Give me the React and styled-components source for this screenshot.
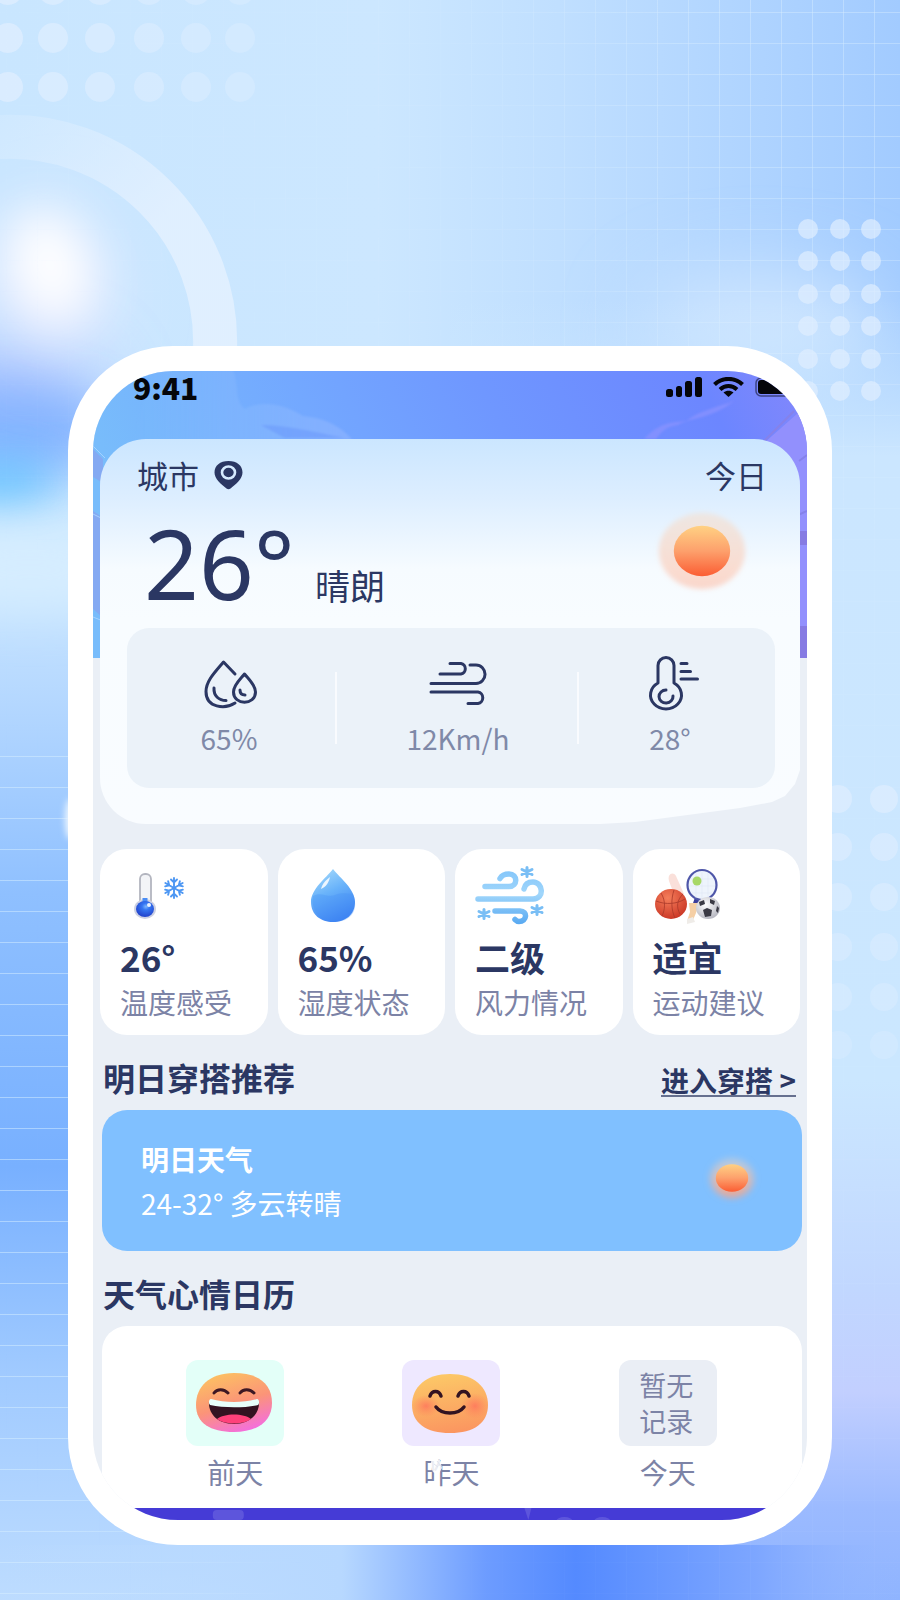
import styled, { createGlobalStyle } from "styled-components";

const GlobalStyle = createGlobalStyle`
  * {
    box-sizing: border-box;
  }
  body {
    margin: 0;
    font-family: "Noto Sans CJK SC", "Noto Sans", sans-serif;
    color: #2b3763;
    background: #cbe6ff;
  }
  h2, p {
    margin: 0;
  }
  svg {
    display: block;
    flex-shrink: 0;
  }
`;

const Page = styled.div`
  position: relative;
  min-height: 100vh;
  padding: 346px 68px 55px;
  overflow: hidden;
`;

const Backdrop = styled.svg`
  position: absolute;
  inset: 0;
  width: 100%;
  height: 100%;
`;

const Phone = styled.main`
  position: relative;
  border: 25px solid #fff;
  border-radius: 105px 105px 110px 110px / 105px 105px 108px 108px;
  background: #fff;
  overflow: hidden;
`;

const Screen = styled.div`
  position: relative;
  background: #eaeff6;
`;

const Sky = styled.svg`
  position: absolute;
  top: 0;
  left: 0;
  width: 100%;
  height: 287px;
`;

const StatusBar = styled.header`
  position: relative;
  display: flex;
  justify-content: space-between;
  height: 68px;
  padding: 0 6px 0 40px;
  color: #05060a;
`;

const Clock = styled.span`
  font-size: 30px;
  font-weight: 900;
  line-height: 32px;
`;

const StatusIcons = styled.div`
  display: flex;
  align-items: flex-start;
  gap: 11px;
  padding-top: 6px;
`;

const Content = styled.div`
  position: relative;
  padding: 0 7px;
`;

const WeatherCard = styled.section`
  padding: 17px 25px 36px 27px;
  border-radius: 46px;
  background: linear-gradient(#cbe6ff 0, #ddeeff 60px, #f6fbff 130px, #f8fcff 180px, #f9fcff 100%);
  clip-path: polygon(
    0 0,
    100% 0,
    100% calc(100% - 54px),
    calc(100% - 5px) calc(100% - 40px),
    calc(100% - 15px) calc(100% - 28px),
    calc(100% - 28px) calc(100% - 22px),
    calc(100% - 60px) calc(100% - 16px),
    calc(100% - 165px) calc(100% - 2px),
    calc(100% - 200px) 100%,
    0 100%
  );
`;

const CardHead = styled.div`
  display: flex;
  align-items: center;
  justify-content: space-between;
  padding: 0 8px 0 10px;
  font-size: 31px;
  line-height: 38px;
`;

const CityButton = styled.button`
  display: flex;
  align-items: center;
  gap: 15px;
  padding: 0;
  border: 0;
  background: none;
  color: inherit;
  font: inherit;
  cursor: pointer;
`;

const Now = styled.div`
  display: flex;
  align-items: baseline;
  gap: 20px;
  height: 134px;
  padding-left: 17px;
`;

const Degrees = styled.span`
  font-family: "Noto Sans", sans-serif;
  font-size: 96px;
  line-height: 138px;
`;

const Condition = styled.span`
  flex: 1;
  font-size: 35px;
`;

const BigSun = styled.div`
  align-self: flex-start;
  margin: 15px 26px 0 0;
`;

const Stats = styled.div`
  display: grid;
  grid-template-columns: 208fr 242fr 198fr;
  align-items: center;
  height: 160px;
  border-radius: 22px;
  background: #ebf2f9;
`;

const Stat = styled.div`
  display: flex;
  flex-direction: column;
  align-items: center;
  justify-content: center;
  height: 72px;
  padding-right: 4px;
  gap: 4px;
  font-size: 28px;
  line-height: 40px;
  color: #7f89a8;
  & + & {
    padding: 0 0 0 2px;
    border-left: 2px solid #f9fbfe;
  }
  &:last-child {
    padding-right: 16px;
  }
`;

const QuickGrid = styled.section`
  display: grid;
  grid-template-columns: repeat(4, 1fr);
  gap: 10px;
  margin-top: 25px;
`;

const QuickCard = styled.div`
  padding: 10px 0 13px 20px;
  border-radius: 27px;
  background: #fff;
`;

const QuickIcon = styled.div`
  display: flex;
  align-items: center;
  height: 72px;
  margin-bottom: 6px;
  padding-left: ${(p) => p.$indent || 0}px;
`;

const QuickValue = styled.p`
  font-size: 35px;
  font-weight: 700;
  line-height: 40px;
`;

const QuickLabel = styled.p`
  margin-top: 5px;
  font-size: 28px;
  line-height: 40px;
  color: #7c83a6;
`;

const SectionHead = styled.div`
  display: flex;
  align-items: flex-end;
  justify-content: space-between;
  padding: 22px 4px 13px 3px;
`;

const SectionTitle = styled.h2`
  font-size: 32px;
  font-weight: 700;
  line-height: 40px;
`;

const MoreLink = styled.a`
  border-bottom: 2px solid #66708f;
  color: inherit;
  font-size: 28px;
  font-weight: 700;
  line-height: 30px;
  text-decoration: none;
`;

const TomorrowCard = styled.section`
  display: flex;
  align-items: flex-start;
  justify-content: space-between;
  margin: 0 -2px 0 2px;
  padding: 27px 43px 26px 39px;
  border-radius: 25px;
  background: #80c0ff;
  color: #fff;
  font-size: 28px;
  line-height: 44px;
  svg {
    margin-top: 18px;
  }
`;

const Strong = styled.p`
  font-weight: 700;
`;

const MoodCard = styled.section`
  display: grid;
  grid-template-columns: repeat(3, 1fr);
  margin: 0 -2px 0 2px;
  padding: 34px 26px 16px 25px;
  border-radius: 25px 25px 0 0;
  background: #fff;
`;

const Mood = styled.div`
  display: flex;
  flex-direction: column;
  align-items: center;
  gap: 6px;
  color: #7c83a6;
  font-size: 28px;
  line-height: 40px;
`;

const MoodTile = styled.div`
  display: flex;
  align-items: center;
  justify-content: center;
  width: 98px;
  height: 86px;
  padding-right: 3px;
  border-radius: 12px;
  background: ${(p) => p.$color};
  font-size: 27px;
  line-height: 36px;
`;

const MoodDay = styled.span`
  position: relative;
`;

const Flake = styled.svg`
  position: absolute;
  top: 6px;
  left: 7px;
`;

const TabBar = styled.svg`
  position: relative;
  width: 100%;
  height: 12px;
  background: #453bd6;
`;

const leftDots = [8, 53, 100, 149, 196, 240];
const rightRows = [229, 261, 294, 326, 359, 391];
const lowerRows = [799, 847, 897, 947, 997, 1045];

function Background() {
  return (
    <Backdrop viewBox="0 0 900 1600" preserveAspectRatio="none" aria-hidden="true">
      <defs>
        <linearGradient id="base" x1="0" y1="0" x2="1" y2="0">
          <stop offset="0" stopColor="#c9e6ff" />
          <stop offset="0.42" stopColor="#cce7ff" />
          <stop offset="0.62" stopColor="#c0dfff" />
          <stop offset="1" stopColor="#a2cbff" />
        </linearGradient>
        <linearGradient id="leftSide" x1="0" y1="0" x2="0" y2="1">
          <stop offset="0" stopColor="#cfeaff" stopOpacity="0" />
          <stop offset="0.08" stopColor="#cfeaff" />
          <stop offset="0.2" stopColor="#b7d9ff" />
          <stop offset="0.38" stopColor="#8fc0ff" />
          <stop offset="0.62" stopColor="#78b0ff" />
          <stop offset="0.8" stopColor="#a0caff" />
          <stop offset="1" stopColor="#bddcff" />
        </linearGradient>
        <linearGradient id="rightSide" x1="0" y1="0" x2="0" y2="1">
          <stop offset="0" stopColor="#cbe7ff" stopOpacity="0" />
          <stop offset="0.12" stopColor="#cbe6ff" />
          <stop offset="0.6" stopColor="#cbe7ff" />
          <stop offset="0.76" stopColor="#c1d7ff" />
          <stop offset="0.84" stopColor="#c2cfff" />
          <stop offset="0.93" stopColor="#9bbaff" />
          <stop offset="1" stopColor="#8fb4ff" />
        </linearGradient>
        <linearGradient id="footer" x1="0" y1="0" x2="1" y2="0">
          <stop offset="0" stopColor="#bddcff" stopOpacity="0" />
          <stop offset="0.38" stopColor="#b7d8ff" />
          <stop offset="0.54" stopColor="#6d9cff" />
          <stop offset="0.64" stopColor="#548aff" />
          <stop offset="0.84" stopColor="#7da6ff" />
          <stop offset="1" stopColor="#98baff" stopOpacity="0" />
        </linearGradient>
        <linearGradient id="gridAcross" x1="0" y1="0" x2="1" y2="0">
          <stop offset="0" stopColor="#fff" stopOpacity="0.1" />
          <stop offset="0.5" stopColor="#fff" stopOpacity="0.2" />
          <stop offset="0.8" stopColor="#fff" stopOpacity="0.8" />
        </linearGradient>
        <linearGradient id="gridDown" x1="0" y1="0" x2="0" y2="1">
          <stop offset="0" stopColor="#fff" />
          <stop offset="0.18" stopColor="#fff" stopOpacity="0.8" />
          <stop offset="0.35" stopColor="#fff" stopOpacity="0.25" />
          <stop offset="1" stopColor="#fff" stopOpacity="0.1" />
        </linearGradient>
        <linearGradient id="ringFade" gradientUnits="userSpaceOnUse" x1="0" y1="100" x2="140" y2="240">
          <stop offset="0" stopColor="#e4f1ff" stopOpacity="0.2" />
          <stop offset="1" stopColor="#e7f2ff" stopOpacity="0.75" />
        </linearGradient>
        <linearGradient id="linesFade" gradientUnits="userSpaceOnUse" x1="0" y1="0" x2="300" y2="0">
          <stop offset="0.2" stopColor="#fff" />
          <stop offset="1" stopColor="#fff" stopOpacity="0" />
        </linearGradient>
        <pattern id="grid" x="6" y="12" width="31" height="31" patternUnits="userSpaceOnUse">
          <path d="M0 .5H31M.5 0V31" stroke="#e2f5ff" strokeOpacity="0.45" />
        </pattern>
        <pattern id="lines" y="12" width="31" height="31" patternUnits="userSpaceOnUse">
          <path d="M0 .5H31" stroke="#d8efff" strokeOpacity="0.5" />
        </pattern>
        <mask id="maskAcross">
          <rect width="900" height="1600" fill="url(#gridAcross)" />
        </mask>
        <mask id="maskDown">
          <rect width="900" height="1600" fill="url(#gridDown)" />
        </mask>
        <mask id="maskLines">
          <rect width="900" height="1600" fill="url(#linesFade)" />
        </mask>
        <filter id="soft" x="-100%" y="-100%" width="300%" height="300%">
          <feGaussianBlur stdDeviation="24" />
        </filter>
        <filter id="softer" x="-100%" y="-100%" width="300%" height="300%">
          <feGaussianBlur stdDeviation="36" />
        </filter>
        <filter id="edge" x="-100%" y="-50%" width="300%" height="200%">
          <feGaussianBlur stdDeviation="3" />
        </filter>
      </defs>
      <rect width="900" height="1600" fill="url(#base)" />
      <ellipse cx="760" cy="330" rx="120" ry="60" fill="#cde5ff" filter="url(#softer)" />
      <rect y="460" width="450" height="1140" fill="url(#leftSide)" />
      <rect x="450" y="300" width="450" height="1300" fill="url(#rightSide)" />
      <ellipse cx="10" cy="405" rx="90" ry="60" fill="#a3bdff" filter="url(#softer)" />
      <ellipse cx="20" cy="430" rx="90" ry="40" fill="#84b4ff" filter="url(#soft)" />
      <ellipse cx="0" cy="482" rx="60" ry="20" fill="#5cc4ff" filter="url(#soft)" />
      <ellipse cx="30" cy="570" rx="140" ry="40" fill="#d6edff" filter="url(#soft)" />
      <ellipse cx="50" cy="285" rx="52" ry="68" fill="#e6e9ff" transform="rotate(-18 50 285)" filter="url(#softer)" />
      <ellipse cx="50" cy="265" rx="38" ry="56" fill="#fff" transform="rotate(-18 50 265)" filter="url(#soft)" />
      <rect y="1545" width="900" height="55" fill="url(#footer)" />
      <g mask="url(#maskDown)">
        <rect width="900" height="1600" fill="url(#grid)" mask="url(#maskAcross)" />
      </g>
      <rect y="740" width="300" height="860" fill="url(#lines)" mask="url(#maskLines)" />
      <path d="M-10 137H0A205 205 0 0 1 215 350" fill="none" stroke="url(#ringFade)" strokeWidth="44" />
      <g fill="#e4efff" fillOpacity="0.65">
        {leftDots.map((x, i) => (
          <g key={x} opacity={1 - i * 0.1}>
            <circle cx={x} cy="-10" r="15" />
            <circle cx={x} cy="38" r="15" />
            <circle cx={x} cy="87" r="15" />
          </g>
        ))}
      </g>
      <g fill="#e0eeff" fillOpacity="0.7">
        {rightRows.map((y) => (
          <g key={y}>
            <circle cx="808" cy={y} r="10" />
            <circle cx="840" cy={y} r="10" />
            <circle cx="871" cy={y} r="10" />
          </g>
        ))}
        {lowerRows.map((y, i) => (
          <g key={y} opacity={0.95 - i * 0.1}>
            <circle cx="838" cy={y} r="14" />
            <circle cx="884" cy={y} r="14" />
          </g>
        ))}
      </g>
      <ellipse cx="70" cy="819" rx="5" ry="20" fill="#eef7ff" filter="url(#edge)" />
    </Backdrop>
  );
}

function SkyArt() {
  return (
    <Sky viewBox="0 0 715 287" preserveAspectRatio="none" aria-hidden="true">
      <defs>
        <linearGradient id="sky" x1="0" y1="0.2" x2="1" y2="0">
          <stop offset="0" stopColor="#78bcfb" />
          <stop offset="0.3" stopColor="#73a8ff" />
          <stop offset="0.55" stopColor="#6f97ff" />
          <stop offset="0.85" stopColor="#6c86ff" />
          <stop offset="1" stopColor="#8587fb" />
        </linearGradient>
        <linearGradient id="cloud" x1="0" y1="0" x2="1" y2="0">
          <stop offset="0" stopColor="#8fc6ff" stopOpacity="0" />
          <stop offset="1" stopColor="#8db3ff" stopOpacity="0.7" />
        </linearGradient>
        <filter id="mist">
          <feGaussianBlur stdDeviation="1" />
        </filter>
      </defs>
      <rect width="715" height="287" fill="url(#sky)" />
      <g filter="url(#mist)">
        <path d="M60 -6h78c10 20 2 34 14 44 18-10 42-4 58 7 20 2 36 8 50 24H40z" fill="url(#cloud)" />
        <path d="M168 54c24 0 44 5 84 13h-60z" fill="#6795fb" fillOpacity="0.5" />
        <path d="M552 68c14-16 28-17 42-18 14-11 32-14 48-20-24 19-44 16-56 24-12 1-18 8-22 14z" fill="#8a93ff" fillOpacity="0.7" />
      </g>
      <path d="M672 72L715 34V287H700V90z" fill="#9290fd" />
      <path d="M672 70L702 40M707 90L715 84M704 145L715 140" stroke="#8582ea" strokeWidth="2" />
      <path d="M706 160h9v14h-9zM706 255h9v32h-9z" fill="#7a66c9" fillOpacity="0.5" />
      <path d="M0 78l10 10v24L0 106zM0 140l9 6v100L0 238z" fill="#8c9cec" fillOpacity="0.6" />
      <path d="M0 75l12 12M0 143l10 5M0 246l10 4" stroke="#a5d2ff" strokeWidth="1" />
    </Sky>
  );
}

function Sun({ width, height, big }) {
  const id = big ? "sunBig" : "sunSmall";
  return (
    <svg width={width} height={height} viewBox="0 0 100 90" preserveAspectRatio="none" overflow="visible" aria-hidden="true">
      <defs>
        <linearGradient id={id} x1="0" y1="0" x2="0" y2="1">
          <stop offset="0" stopColor="#ffd183" />
          <stop offset="0.5" stopColor="#fda06c" />
          <stop offset="1" stopColor="#fb5d33" />
        </linearGradient>
        <linearGradient id={id + "Halo"} x1="0" y1="0" x2="0" y2="1">
          <stop offset="0" stopColor="#ffd9b8" stopOpacity="0.4" />
          <stop offset="1" stopColor="#ff9f7c" stopOpacity={big ? 0.4 : 0.9} />
        </linearGradient>
        <filter id={id + "Blur"} x="-50%" y="-50%" width="200%" height="200%">
          <feGaussianBlur stdDeviation={big ? 3 : 7} />
        </filter>
      </defs>
      <ellipse cx="50" cy="45" rx={big ? 46 : 40} ry={big ? 41 : 38} fill={`url(#${id}Halo)`} filter={`url(#${id}Blur)`} />
      <ellipse cx="50" cy="45" rx="30" ry="27" fill={`url(#${id})`} />
    </svg>
  );
}

function SignalIcon() {
  return (
    <svg width="36" height="20" viewBox="0 0 36 20" fill="currentColor" aria-hidden="true">
      <rect y="12" width="7" height="8" rx="2.500" />
      <rect x="10" y="9" width="6" height="11" rx="2.500" />
      <rect x="19" y="4" width="7" height="16" rx="2.500" />
      <rect x="29" width="7" height="20" rx="2.500" />
    </svg>
  );
}

function WifiIcon() {
  return (
    <svg width="31" height="20" viewBox="0 0 31 20" fill="none" stroke="currentColor" strokeWidth="4" aria-hidden="true">
      <path d="M1.500 7.500C9 0 22 0 29.500 7.500" />
      <path d="M7 12.500c5-4.600 12-4.600 17 0" />
      <path d="M10.500 15.500c3-2.500 7-2.500 10 0L15.500 20z" fill="currentColor" stroke="none" />
    </svg>
  );
}

function BatteryIcon() {
  return (
    <svg width="46" height="20" viewBox="0 0 46 20" aria-hidden="true">
      <rect x="1" y="1" width="42" height="18" rx="5" fill="none" stroke="#3d4484" strokeWidth="1.500" />
      <rect x="3" y="3" width="38" height="14" rx="3" fill="currentColor" />
    </svg>
  );
}

function PinIcon() {
  return (
    <svg width="29" height="29" viewBox="0 1 29 29" aria-hidden="true">
      <path d="M14.500 1C23 1 28.500 5.500 28.500 12.500c0 6.500-6.500 11.500-12 16a3.200 3.200 0 0 1-4 0C7 24 .5 19 .5 12.500.5 5.500 6 1 14.500 1z" fill="#2b3763" />
      <ellipse cx="14.500" cy="12.500" rx="6.500" ry="6" fill="none" stroke="#d7ebff" strokeWidth="2.600" />
    </svg>
  );
}

const LineIcon = styled.svg.attrs({ fill: "none", "aria-hidden": true })`
  overflow: visible;
  stroke: #2b3763;
  stroke-width: 3;
  stroke-linecap: round;
  stroke-linejoin: round;
`;

function DropsIcon() {
  return (
    <LineIcon width="57" height="56" viewBox="-2 1 57 56">
      <path d="M32 17L20.500 5C12 15 3 24 3 34.500 3 51 22 52.500 32 46" />
      <path d="M41.500 17c-4 5-11 11-11 18 0 13.500 22 13.500 22 0 0-7-7-13-11-18z" />
      <path d="M11 31c-.5 8 5 12.500 12 12.500M37 33c0 3.500 2 5 5 5" />
    </LineIcon>
  );
}

function WindIcon() {
  return (
    <LineIcon width="62" height="56" viewBox="0 1 62 56">
      <path d="M23 6.500h11a5 5.300 0 0 1 0 10.500H13" />
      <path d="M43 8h6a9 9.200 0 0 1 0 18.500H4" />
      <path d="M4 35h47a5.500 5.800 0 0 1 0 11.500H41" />
    </LineIcon>
  );
}

function ThermometerIcon() {
  return (
    <LineIcon width="63" height="56" viewBox="-8 2 63 56">
      <path d="M11 27V9.500a8 8 0 0 1 16 0V27a15.500 14 0 1 1-16 0z" />
      <path d="M19 34a7 6.500 0 1 0 7 6" />
      <path d="M34 7.500h6M34 15.500h9.500M34 23h16.500" />
    </LineIcon>
  );
}

function ColdIcon() {
  return (
    <svg width="56" height="56" viewBox="0 0 56 56" aria-hidden="true">
      <defs>
        <radialGradient id="bulb" cx="0.55" cy="0.35" r="0.6">
          <stop offset="0" stopColor="#7cb7ff" />
          <stop offset="0.35" stopColor="#3576f2" />
          <stop offset="1" stopColor="#2347cf" />
        </radialGradient>
      </defs>
      <rect x="8" y="7" width="11" height="34" rx="5" fill="#f3f4f7" stroke="#b3b5bf" strokeWidth="1.800" />
      <ellipse cx="13" cy="42" rx="11" ry="10" fill="#cdd1e3" />
      <rect x="10.500" y="31" width="5" height="8" fill="#4b8df5" />
      <ellipse cx="13" cy="42" rx="9" ry="8" fill="url(#bulb)" />
      <circle cx="17" cy="38" r="2" fill="#e9f3ff" />
      <g stroke="#4d97f3" strokeWidth="1.900" strokeLinecap="round" fill="none">
        {[0, 60, 120, 180, 240, 300].map((a) => (
          <path key={a} d="M42 21V11M39 12.500l3 3 3-3" transform={`rotate(${a} 42 21)`} />
        ))}
      </g>
    </svg>
  );
}

function HumidityIcon() {
  return (
    <svg width="48" height="56" viewBox="0 0 48 56" aria-hidden="true">
      <defs>
        <linearGradient id="water" x1="0.2" y1="0" x2="0.6" y2="1">
          <stop offset="0" stopColor="#a5dafb" />
          <stop offset="0.45" stopColor="#68b2fa" />
          <stop offset="1" stopColor="#3c80f2" />
        </linearGradient>
      </defs>
      <path d="M23 2c7 9 22 20 22 33 0 13-10 20-22 20S1 48 1 35C1 22 16 11 23 2z" fill="url(#water)" />
      <path d="M3 29c8-5 14 2 22-1 8-3 12-1 18-1 4 10 3 21-8 26C20 59 0 51 3 29z" fill="#438df6" fillOpacity="0.3" />
      <path d="M11 22c1-5 5-9 9-12-1 5-4 10-9 12z" fill="#fff" fillOpacity="0.85" />
    </svg>
  );
}

function BreezeIcon() {
  return (
    <svg width="70" height="60" viewBox="0 0 70 60" fill="none" overflow="visible" aria-hidden="true">
      <defs>
        <linearGradient id="breeze" gradientUnits="userSpaceOnUse" x1="0" y1="0" x2="0" y2="58">
          <stop offset="0" stopColor="#7fc3fa" />
          <stop offset="0.5" stopColor="#a0d6fb" />
          <stop offset="1" stopColor="#5babf2" />
        </linearGradient>
      </defs>
      <g stroke="url(#breeze)" strokeWidth="5.500" strokeLinecap="round">
        <path d="M10 21.500h24c9 0 9-12.500 0-12.500-5 0-7 1-9 4.500" />
        <path d="M3 34h55c12 0 10-17 0-17-5 0-8 2-9 7" />
        <path d="M20 46h25c8 0 7 10.500-1 10.500-2 0-3-1-4-2" />
      </g>
      <g stroke="#79bef5" strokeWidth="3" strokeLinecap="round">
        {[[52, 7], [9, 49], [62, 45]].map(([x, y]) => (
          <path key={x} d={`M${x} ${y - 4.5}v9M${x - 5} ${y - 2.5}l10 5M${x - 5} ${y + 2.5}l10-5`} />
        ))}
      </g>
    </svg>
  );
}

function SportsIcon() {
  return (
    <svg width="66" height="58" viewBox="0 0 66 58" aria-hidden="true">
      <defs>
        <radialGradient id="basket" cx="0.4" cy="0.3" r="0.75">
          <stop offset="0" stopColor="#f57e5b" />
          <stop offset="1" stopColor="#c93524" />
        </radialGradient>
        <radialGradient id="soccer" cx="0.4" cy="0.35" r="0.7">
          <stop offset="0" stopColor="#fff" />
          <stop offset="1" stopColor="#b3b4be" />
        </radialGradient>
      </defs>
      <path d="M14 15c-2-7 4-10 7-5l8 18-9 3z" fill="#fae0da" />
      <path d="M41 33l-2 6 5-2z" fill="#3b3e9b" stroke="#3b3e9b" strokeWidth="3" />
      <ellipse cx="47" cy="19" rx="14.500" ry="15" fill="#eef4fc" stroke="#4f57a9" strokeWidth="2.200" />
      <path d="M36 13h22M34 20h26M37 27h20M41 7v25M47 5v28M53 7v25" stroke="#dfe7f5" strokeWidth="0.600" />
      <circle cx="42" cy="15" r="4.500" fill="#a7d867" />
      <path d="M34 37h10l-3 10-3 7-6 1 3-9z" fill="#f5cfa5" />
      <path d="M32 53l6-2 2 5-8 2z" fill="#efece8" />
      <ellipse cx="16" cy="38" rx="16" ry="15" fill="url(#basket)" />
      <path d="M1 35c10 4 21 3 29-2M19 24c-3 9-3 20 1 28M6 27c5 8 4 17 1 23M28 28c-6 6-7 13-3 20" stroke="#a8392a" strokeWidth="0.800" fill="none" />
      <ellipse cx="53" cy="42" rx="12" ry="11" fill="url(#soccer)" />
      <path d="M48 44l4-2 5 2-1 6-6 1zM44 36l5-2 1 4-5 2zM55 33l5 2-1 4-4-2z" fill="#3a3a44" />
      <path d="M62 40l2 2-1 5-2-2z" fill="#3a3a44" />
    </svg>
  );
}

function LaughFace() {
  return (
    <svg width="76" height="60" viewBox="0 0 76 60" role="img" aria-label="大笑">
      <defs>
        <linearGradient id="laugh" x1="0.35" y1="0" x2="0.75" y2="1">
          <stop offset="0" stopColor="#fcbf63" />
          <stop offset="0.5" stopColor="#fb9478" />
          <stop offset="1" stopColor="#f36be6" />
        </linearGradient>
      </defs>
      <path d="M38 0c26 0 38 12 38 30S62 59 38 59 0 50 0 32 13 0 38 0z" fill="url(#laugh)" />
      <path d="M18 20c3-4.500 10-4.500 14 0M44 20c3-4.500 10-4.500 14 0" stroke="#3d1824" strokeWidth="3" strokeLinecap="round" fill="none" />
      <path d="M13 28c16 5 34 5 50 0 1 13-9 23-25 23S12 41 13 28z" fill="#331321" />
      <path d="M15 26c14 4 32 4 46 0 2 0 3 4 1 6-14 3-34 3-48 0-2-2-1-6 1-6z" fill="#e8fffb" />
      <path d="M21 46c7-6 27-6 34 0-8 6-26 6-34 0z" fill="#ff417a" />
    </svg>
  );
}

function SmileFace() {
  return (
    <svg width="76" height="60" viewBox="0 0 76 60" role="img" aria-label="微笑">
      <defs>
        <linearGradient id="smile" x1="0.4" y1="0" x2="0.6" y2="1">
          <stop offset="0" stopColor="#fcc867" />
          <stop offset="1" stopColor="#fb9560" />
        </linearGradient>
        <radialGradient id="blush">
          <stop offset="0" stopColor="#ff6f5c" stopOpacity="0.75" />
          <stop offset="1" stopColor="#ff7f5c" stopOpacity="0" />
        </radialGradient>
      </defs>
      <path d="M38 1c24 0 38 13 38 31S62 60 38 60 0 50 0 32 14 1 38 1z" fill="url(#smile)" />
      <ellipse cx="14" cy="33" rx="14" ry="11" fill="url(#blush)" />
      <ellipse cx="63" cy="33" rx="14" ry="13" fill="url(#blush)" />
      <path d="M18 23c2-6 9-6 11 0M46 23c2-6 9-6 11 0M24 34c6 8 22 8 28 0" stroke="#331321" strokeWidth="3.500" strokeLinecap="round" fill="none" />
    </svg>
  );
}

const stats = [
  { text: "65%", icon: <DropsIcon /> },
  { text: "12Km/h", icon: <WindIcon /> },
  { text: "28°", icon: <ThermometerIcon /> },
];

const quickItems = [
  { value: "26°", label: "温度感受", icon: <ColdIcon />, indent: 12 },
  { value: "65%", label: "湿度状态", icon: <HumidityIcon />, indent: 12 },
  { value: "二级", label: "风力情况", icon: <BreezeIcon /> },
  { value: "适宜", label: "运动建议", icon: <SportsIcon />, indent: 2 },
];

export default function App() {
  return (
    <Page>
      <GlobalStyle />
      <Background />
      <Phone>
        <Screen>
          <SkyArt />
          <StatusBar>
            <Clock>9:41</Clock>
            <StatusIcons>
              <SignalIcon />
              <WifiIcon />
              <BatteryIcon />
            </StatusIcons>
          </StatusBar>
          <Content>
            <WeatherCard>
              <CardHead>
                <CityButton type="button">
                  城市
                  <PinIcon />
                </CityButton>
                <span>今日</span>
              </CardHead>
              <Now>
                <Degrees>26°</Degrees>
                <Condition>晴朗</Condition>
                <BigSun>
                  <Sun big width={94} height={84} />
                </BigSun>
              </Now>
              <Stats>
                {stats.map((item) => (
                  <Stat key={item.text}>
                    {item.icon}
                    <span>{item.text}</span>
                  </Stat>
                ))}
              </Stats>
            </WeatherCard>

            <QuickGrid>
              {quickItems.map((item) => (
                <QuickCard key={item.label}>
                  <QuickIcon $indent={item.indent}>{item.icon}</QuickIcon>
                  <QuickValue>{item.value}</QuickValue>
                  <QuickLabel>{item.label}</QuickLabel>
                </QuickCard>
              ))}
            </QuickGrid>

            <SectionHead>
              <SectionTitle>明日穿搭推荐</SectionTitle>
              <MoreLink href="#outfit">进入穿搭 &gt;</MoreLink>
            </SectionHead>
            <TomorrowCard>
              <div>
                <Strong>明日天气</Strong>
                <p>24-32° 多云转晴</p>
              </div>
              <Sun width={54} height={46} />
            </TomorrowCard>

            <SectionHead>
              <SectionTitle>天气心情日历</SectionTitle>
            </SectionHead>
            <MoodCard>
              <Mood>
                <MoodTile $color="#e3fff8">
                  <LaughFace />
                </MoodTile>
                <MoodDay>前天</MoodDay>
              </Mood>
              <Mood>
                <MoodTile $color="#eee8ff">
                  <SmileFace />
                </MoodTile>
                <MoodDay>
                  昨天
                  <Flake width="12" height="18" viewBox="0 0 12 18" aria-hidden="true">
                    <path d="M2 1l8 1 2 8-4 7-5-3-3-7z" fill="#fff" fillOpacity="0.85" />
                    <path d="M7 3l4 5M4 6l4 3" stroke="#dfe3ee" />
                  </Flake>
                </MoodDay>
              </Mood>
              <Mood>
                <MoodTile $color="#eaeef5">
                  暂无
                  <br />
                  记录
                </MoodTile>
                <MoodDay>今天</MoodDay>
              </Mood>
            </MoodCard>
          </Content>
          <TabBar viewBox="0 0 715 12" preserveAspectRatio="none" aria-hidden="true">
            <g fill="#6e68e0" fillOpacity="0.6">
              <rect x="120" y="2" width="31" height="10" rx="4" />
              <path d="M432 0h7l-3 12z" />
              <ellipse cx="472" cy="13" rx="8" ry="4" />
              <ellipse cx="510" cy="13" rx="8" ry="4" />
            </g>
          </TabBar>
        </Screen>
      </Phone>
    </Page>
  );
}
